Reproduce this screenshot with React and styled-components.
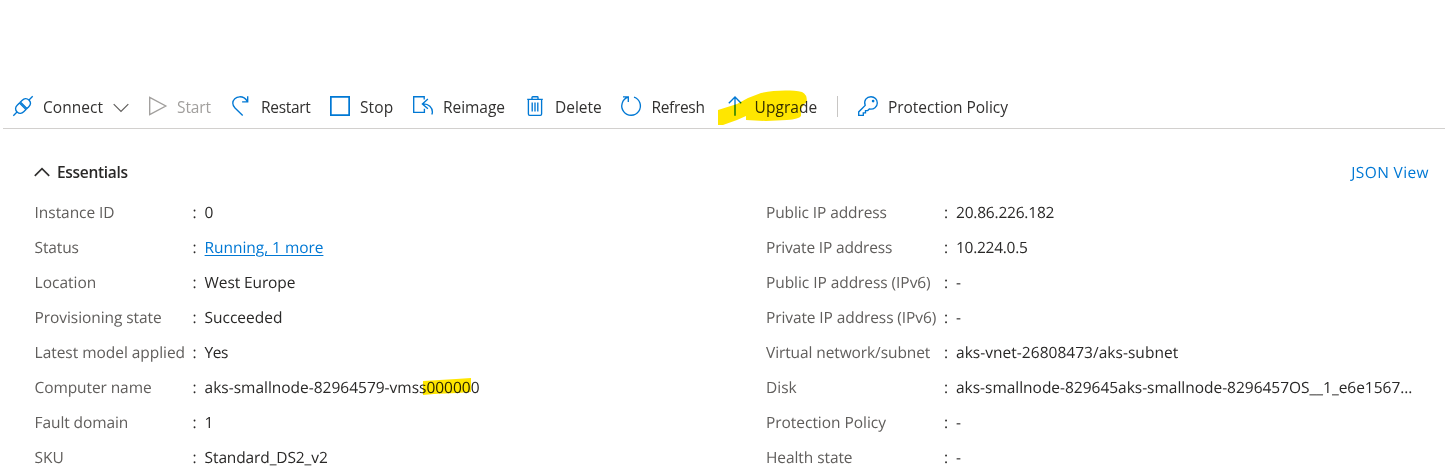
import React from "react";
import styled, { createGlobalStyle } from "styled-components";

const GlobalStyle = createGlobalStyle`
  * { box-sizing: border-box; }
  body {
    margin: 0;
    background: #fff;
    overflow: hidden;
    color: #292827;
    font: 15.5px/20px "Open Sans", "Noto Sans", sans-serif;
    text-rendering: geometricPrecision;
  }
`;

const Page = styled.main`
  width: 1445px;
  height: 475px;
  padding-top: 84px;
  overflow: hidden;
`;

const Toolbar = styled.div`
  display: flex;
  align-items: center;
  height: 45px;
  margin-left: 3px;
  padding-left: 10px;
  border-bottom: 1px solid #d2d0ce;
`;

const Command = styled.button`
  display: flex;
  align-items: center;
  flex: none;
  gap: ${(p) => p.$gap || 10}px;
  width: ${(p) => p.$width}px;
  height: 44px;
  padding: 0;
  border: 0;
  background: none;
  color: ${(p) => (p.$disabled ? "#a19f9d" : "#323130")};
  font: inherit;
`;

const Text = styled.span`
  letter-spacing: ${(p) => p.$spacing || 0}px;
  white-space: pre;
`;

const Caption = styled(Text)`
  padding-top: 2px;
`;

const Icon = styled.svg`
  flex: none;
  display: block;
  width: 20px;
  height: 20px;
  fill: none;
  stroke: ${(p) => p.$color || "#0078d4"};
  stroke-width: ${(p) => p.$weight || 1.35};
  overflow: visible;
`;

const Chevron = styled.svg`
  flex: none;
  width: 16px;
  height: 10px;
  margin-top: ${(p) => p.$drop || 0}px;
  fill: none;
  stroke: ${(p) => p.$color};
  stroke-width: ${(p) => p.$weight};
`;

const Divider = styled.i`
  flex: none;
  width: 1px;
  height: 21px;
  margin-right: 20px;
  background: #c8c6c4;
`;

const Marked = styled.span`
  position: relative;
  display: inline-block;
`;

const Marker = styled.svg`
  position: absolute;
  left: ${(p) => p.$left}px;
  top: ${(p) => p.$top}px;
  fill: #ffe600;
  mix-blend-mode: multiply;
  pointer-events: none;
`;

const MarkedCommand = styled(Command)`
  position: relative;
`;

const Header = styled.header`
  display: flex;
  align-items: center;
  justify-content: space-between;
  height: 65px;
  padding: 20px 16px 0 34px;
`;

const Toggle = styled.button`
  display: flex;
  align-items: center;
  gap: 7px;
  padding: 0;
  border: 0;
  background: none;
  color: #292827;
  font: inherit;
  font-weight: 600;
`;

const Link = styled.a`
  color: #0078d4;
  letter-spacing: ${(p) => p.$spacing || 0}px;
  text-decoration: ${(p) => (p.$underlined ? "underline" : "none")};
  text-decoration-thickness: 1px;
  text-underline-offset: 2px;
`;

const Details = styled.div`
  display: grid;
  grid-template-columns: 731.4px 1fr;
  padding-left: 34.6px;
`;

const Row = styled.div`
  display: grid;
  grid-template-columns: ${(p) => p.$label}px 12px 1fr;
  align-items: center;
  height: 35px;
  white-space: nowrap;
`;

const Label = styled.span`
  color: #605e5c;
  letter-spacing: ${(p) => p.$spacing || 0}px;
`;

const icons = {
  connect: (
    <>
      <path d="M.3 19.7 4 16M16 4 19.7.3" />
      <path d="M4.1 15.9C1.8 13.6 2.3 11.2 4.2 9.3L6.5 7l6.5 6.5-2.3 2.3c-1.9 1.9-4.3 2.4-6.6.1Z" />
      <path d="M15.9 4.1c2.3 2.3 1.8 4.7-.1 6.6L13.9 12.6 7.4 6.1 9.3 4.2c1.9-1.9 4.3-2.4 6.6-.1Z" />
    </>
  ),
  start: <path d="M1.7 1.3v17.4L17.8 10Z" />,
  restart: <path d="M16.7.2v5.6h-5.6M16.4 5.5C14.6 2.4 11.7.7 8.6.8 4.9.9 1.8 3.8 1.8 7.2c0 2 .9 3.4 2.2 4.7l7.7 7.6" />,
  stop: <path d="M.85.85h18.3v18.3H.85Z" />,
  reimage: (
    <>
      <path d="M11.2 3.5V.7H.7v15.6h10.7v-3.6" />
      <path d="m14.9 3-5.5 4.9 5.5 4.9M9.6 7.9c6.4-.4 9.8 3.8 9.8 8.2 0 .9-.2 1.7-.6 2.4" />
    </>
  ),
  trash: (
    <>
      <path d="M2.2 3.3h15.6M7 3V1.4c0-.4.3-.7.7-.7h4.6c.4 0 .7.3.7.7V3M3.4 3.5V18c0 .8.5 1.3 1.3 1.3h10.6c.8 0 1.3-.5 1.3-1.3V3.5" />
      <path d="M7.2 6.6v9M10 6.6v9M12.8 6.6v9" />
    </>
  ),
  refresh: <path d="M2 .8h5.3v5.1M6.9 1.2A9.3 9.3 0 1 0 13 1.1" />,
  upgrade: <path d="M10 19.8V1M3.8 7.2 10 1l6.2 6.2" />,
  key: (
    <>
      <path d="M7.2 9.4C5.4 4.2 8.7.7 13 .7c3.6 0 6.3 2.8 6.3 6.2 0 4-3.5 7-8 6.1l-1.6 1.6H7.5v2.2H5.3v2.5H.7v-3.4Z" />
      <circle cx="15.1" cy="5" r=".7" fill="#0078d4" />
    </>
  ),
};

const instance = [
  ["Instance ID", -0.06, "0"],
  ["Status", -0.15, <Link $underlined $spacing={-0.05}>Running, 1 more</Link>],
  ["Location", 0, "West Europe", -0.11],
  ["Provisioning state", -0.08, "Succeeded", -0.02],
  ["Latest model applied", -0.04, "Yes", -0.45],
  [
    "Computer name",
    -0.1,
    <>
      aks-smallnode-82964579-vmss
      <Marked>
        000000
        <Marker $left={-3} $top={1} width="50" height="19" viewBox="0 0 50 19">
          <path d="M0 3 33 1 48 0v14l-14 1-23 1-11 1Z" />
        </Marker>
      </Marked>
    </>,
    -0.01,
  ],
  ["Fault domain", -0.1, "1"],
  ["SKU", -0.05, "Standard_DS2_v2", -0.12],
];

const network = [
  ["Public IP address", -0.11, "20.86.226.182", -0.2],
  ["Private IP address", -0.17, "10.224.0.5", -0.27],
  ["Public IP address (IPv6)", -0.06, "-"],
  ["Private IP address (IPv6)", -0.1, "-"],
  ["Virtual network/subnet", -0.1, "aks-vnet-26808473/aks-subnet", 0.03],
  ["Disk", 0, "aks-smallnode-829645aks-smallnode-8296457OS__1_e6e1567...", -0.02],
  ["Protection Policy", -0.04, "-"],
  ["Health state", -0.08, "-"],
];

const Glyph = ({ name, ...rest }) => (
  <Icon viewBox="0 0 20 20" {...rest}>{icons[name]}</Icon>
);

const Column = ({ rows, label }) => (
  <div>
    {rows.map(([name, spacing, value, valueSpacing]) => (
      <Row key={name} $label={label}>
        <Label $spacing={spacing}>{name}</Label>
        <span>:</span>
        <Text $spacing={valueSpacing}>{value}</Text>
      </Row>
    ))}
  </div>
);

export default function App() {
  return (
    <Page>
      <GlobalStyle />
      <Toolbar>
        <Command $width={135}>
          <Glyph name="connect" />
          <Caption $spacing={0.05}>Connect</Caption>
          <Chevron $color="#605e5c" $weight={1.2} $drop={4} viewBox="0 0 16 10">
            <path d="m.7 1.2 7.3 7.3 7.3-7.3" />
          </Chevron>
        </Command>
        <Command $width={83} $gap={9} $disabled>
          <Glyph name="start" $color="#a19f9d" />
          <Caption $spacing={-0.1}>Start</Caption>
        </Command>
        <Command $width={99} $gap={10}>
          <Glyph name="restart" />
          <Caption $spacing={-0.3}>Restart</Caption>
        </Command>
        <Command $width={83}>
          <Glyph name="stop" $weight={1.7} />
          <Caption $spacing={0.1}>Stop</Caption>
        </Command>
        <Command $width={112}>
          <Glyph name="reimage" />
          <Caption $spacing={-0.05}>Reimage</Caption>
        </Command>
        <Command $width={96}>
          <Glyph name="trash" />
          <Caption>Delete</Caption>
        </Command>
        <Command $width={104} $gap={10.5}>
          <Glyph name="refresh" />
          <Caption $spacing={-0.33}>Refresh</Caption>
        </Command>
        <MarkedCommand $width={112} $gap={9.6}>
          <Glyph name="upgrade" />
          <Caption $spacing={0.03}>Upgrade</Caption>
          <Marker $left={-7.5} $top={6} width="90" height="36" viewBox="0 0 90 36">
            <path d="M0 20 19 14 30 8 43 3C57 0 74 0 84 2q5 2 5 10l-3 2-3 5v7q-2 3-14 4l-21 1-20-1v-4L19 30 5 35H0Z" />
          </Marker>
        </MarkedCommand>
        <Divider />
        <Command $width={152}>
          <Glyph name="key" />
          <Caption $spacing={-0.04}>Protection Policy</Caption>
        </Command>
      </Toolbar>
      <Header>
        <Toggle>
          <Chevron $color="#323130" $weight={1.7} viewBox="0 0 16 10">
            <path d="m.8 8.8 7.2-7.2 7.2 7.2" />
          </Chevron>
          <Text $spacing={-0.3}>Essentials</Text>
        </Toggle>
        <Link $spacing={0.38}>JSON View</Link>
      </Header>
      <Details>
        <Column rows={instance} label={158} />
        <Column rows={network} label={178} />
      </Details>
    </Page>
  );
}
